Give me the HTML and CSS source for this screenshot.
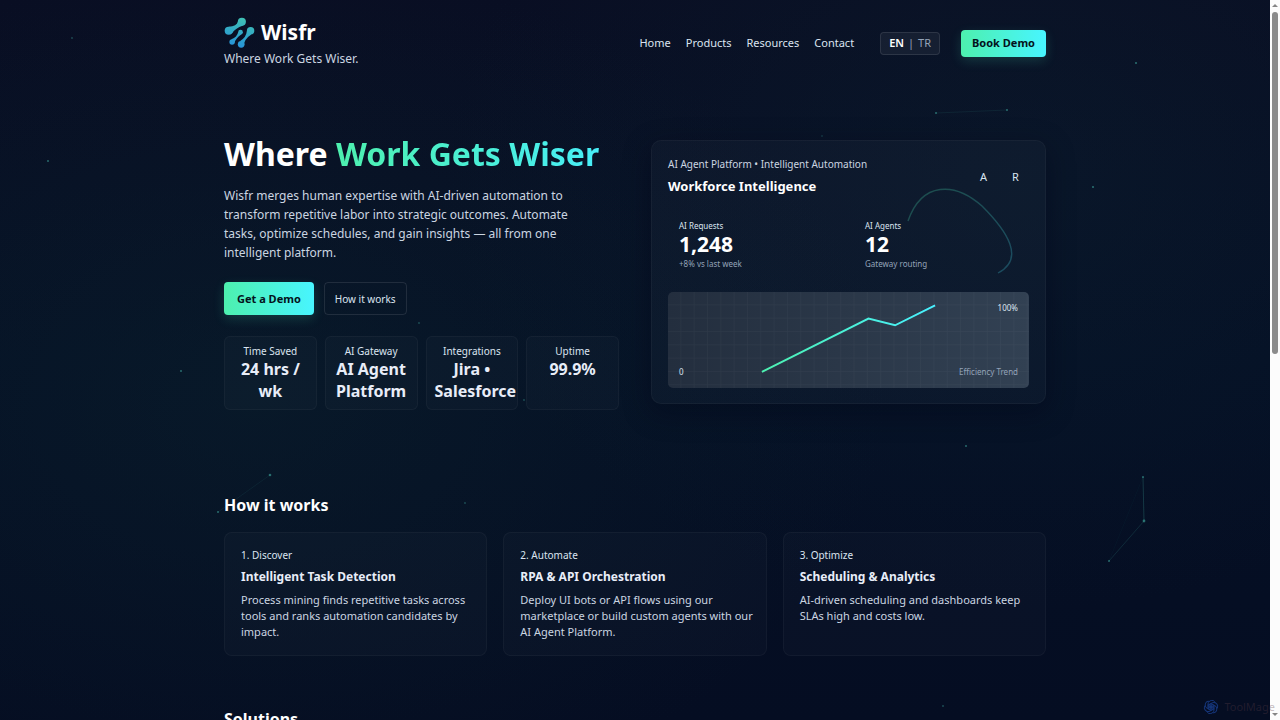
FILE: index.html
```html
<!DOCTYPE html>
<html lang="en">
<head>
<meta charset="utf-8">
<meta name="viewport" content="width=device-width, initial-scale=1">
<title>Wisfr – Where Work Gets Wiser</title>
<link rel="stylesheet" href="styles.css">
</head>
<body>
<div class="shell">
  <div class="page">
    <svg class="particles" aria-hidden="true">
      <g stroke="#4fd6c4" fill="none">
        <path d="M936 113L1007 110" stroke-opacity=".08"/>
        <path d="M270 475L218 512" stroke-opacity=".07"/>
        <path d="M1143 477L1144 521" stroke-opacity=".2"/>
        <path d="M1144 521L1109 561" stroke-opacity=".13"/>
        <path d="M1143 477L1109 561" stroke-opacity=".03"/>
      </g>
      <g fill="#4fd6c4" fill-opacity=".45">
        <circle cx="936" cy="113" r="1"/><circle cx="1007" cy="110" r="1"/>
        <circle cx="270" cy="475" r="1.3"/><circle cx="218" cy="512" r="1"/>
        <circle cx="1143" cy="477" r="1"/><circle cx="1144" cy="521" r="1.4"/><circle cx="1109" cy="561" r="1"/>
        <circle cx="1136" cy="63" r="1.1"/><circle cx="1093" cy="187" r="1.1"/>
        <circle cx="48" cy="161" r="1"/><circle cx="181" cy="371" r="1"/><circle cx="966" cy="446" r="1"/>
      </g>
      <g fill="#4fd6c4" fill-opacity=".3">
        <circle cx="72" cy="38" r=".9"/><circle cx="465" cy="503" r=".9"/><circle cx="419" cy="323" r=".9"/>
        <circle cx="524" cy="400" r=".9"/><circle cx="822" cy="136" r=".8"/><circle cx="943" cy="706" r="1"/>
      </g>
    </svg>

    <div class="container">
      <header class="header">
        <div class="brand">
          <a class="brand-link" href="#">
            <svg class="logo" viewBox="0 0 92 92" aria-hidden="true">
              <defs>
                <linearGradient id="logoFill" gradientUnits="userSpaceOnUse" x1="60" y1="5" x2="35" y2="92">
                  <stop offset="0" stop-color="#3fc0b4"/><stop offset="1" stop-color="#2591da"/>
                </linearGradient>
              </defs>
              <g fill="url(#logoFill)">
                <circle cx="53" cy="14" r="12"/><circle cx="14" cy="41" r="12"/>
                <path d="M41 14Q38 27 14 29L24 48Q32 34 57 25Z"/>
                <circle cx="49" cy="45" r="7"/><circle cx="24" cy="74" r="8"/>
                <path d="M42 45Q39 59 22 66L31 77Q35 62 52 51Z"/>
                <circle cx="79" cy="41" r="11"/><circle cx="51" cy="81" r="10"/>
                <path d="M68 41Q66 61 48 71L59 86Q59 66 81 52Z"/>
              </g>
            </svg>
            <span class="brand-name">Wisfr</span>
          </a>
          <span class="tagline">Where Work Gets Wiser.</span>
        </div>
        <div class="header-right">
          <nav class="nav">
            <a href="#">Home</a><a href="#">Products</a><a href="#">Resources</a><a href="#">Contact</a>
          </nav>
          <div class="lang">
            <button class="lang-btn active" type="button">EN</button><span>|</span><button class="lang-btn" type="button">TR</button>
          </div>
          <button class="btn btn-primary btn-small" type="button">Book Demo</button>
        </div>
      </header>

      <main>
        <section class="hero">
          <div class="hero-copy">
            <h1 class="hero-title">Where <span class="gradient-text">Work Gets Wiser</span></h1>
            <p class="lead">Wisfr merges human expertise with AI-driven automation to transform repetitive labor into strategic outcomes. Automate tasks, optimize schedules, and gain insights — all from one intelligent platform.</p>
            <div class="actions">
              <button class="btn btn-primary" type="button">Get a Demo</button>
              <button class="btn btn-ghost" type="button">How it works</button>
            </div>
            <div class="stats">
              <div class="stat"><div class="stat-label">Time Saved</div><div class="stat-value">24 hrs / wk</div></div>
              <div class="stat"><div class="stat-label">AI Gateway</div><div class="stat-value">AI Agent Platform</div></div>
              <div class="stat"><div class="stat-label">Integrations</div><div class="stat-value">Jira • Salesforce</div></div>
              <div class="stat"><div class="stat-label">Uptime</div><div class="stat-value">99.9%</div></div>
            </div>
          </div>

          <div class="panel">
            <svg class="orbit" viewBox="0 0 120 100" aria-hidden="true">
              <defs>
                <linearGradient id="orbitStroke" x1="0" y1="0" x2="1" y2="1">
                  <stop offset="0" stop-color="#4df0b0"/><stop offset="1" stop-color="#48e8ff"/>
                </linearGradient>
              </defs>
              <path d="M8 42C22 2 55 3 82 27C108 53 125 80 98 94" fill="none" stroke="url(#orbitStroke)" stroke-opacity=".24" stroke-width="1.4"/>
            </svg>
            <div class="panel-head">
              <div>
                <div class="panel-kicker">AI Agent Platform • Intelligent Automation</div>
                <h2 class="panel-title">Workforce Intelligence</h2>
              </div>
              <div class="avatars"><span class="avatar">A</span><span class="avatar">R</span></div>
            </div>
            <div class="metrics">
              <div class="metric"><div class="metric-label">AI Requests</div><div class="metric-value">1,248</div><div class="metric-note">+8% vs last week</div></div>
              <div class="metric"><div class="metric-label">AI Agents</div><div class="metric-value">12</div><div class="metric-note">Gateway routing</div></div>
            </div>
            <div class="chart">
              <svg class="chart-plot" viewBox="0 0 542 144" role="img" aria-label="Efficiency trend">
                <defs>
                  <pattern id="grid" width="20" height="20" patternUnits="userSpaceOnUse">
                    <path d="M20 0V20H0" fill="none" stroke="#fff" stroke-opacity=".035" stroke-width="2"/>
                  </pattern>
                  <linearGradient id="trend" x1="0" y1="0" x2="1" y2="0">
                    <stop offset="0" stop-color="#4df0b0"/><stop offset="1" stop-color="#48f0ff"/>
                  </linearGradient>
                </defs>
                <rect width="542" height="144" fill="url(#grid)"/>
                <polyline points="141,120 301,40 341,50 401,20" fill="none" stroke="url(#trend)" stroke-width="3"/>
              </svg>
              <div class="chart-labels">
                <div class="chart-row"><span></span><span>100%</span></div>
                <div class="chart-row"><span>0</span><span class="dim">Efficiency Trend</span></div>
              </div>
            </div>
          </div>
        </section>

        <section class="section">
          <h2 class="section-title">How it works</h2>
          <div class="steps">
            <article class="step"><div class="step-num">1. Discover</div><h3 class="step-title">Intelligent Task Detection</h3><p class="step-text">Process mining finds repetitive tasks across tools and ranks automation candidates by impact.</p></article>
            <article class="step"><div class="step-num">2. Automate</div><h3 class="step-title">RPA &amp; API Orchestration</h3><p class="step-text">Deploy UI bots or API flows using our marketplace or build custom agents with our AI Agent Platform.</p></article>
            <article class="step"><div class="step-num">3. Optimize</div><h3 class="step-title">Scheduling &amp; Analytics</h3><p class="step-text">AI-driven scheduling and dashboards keep SLAs high and costs low.</p></article>
          </div>
        </section>

        <section class="section">
          <h2 class="section-title">Solutions</h2>
        </section>
      </main>
    </div>
  </div>

  <div class="scrollbar" aria-hidden="true">
    <span class="arrow arrow-up"></span>
    <span class="thumb"></span>
    <span class="arrow arrow-down"></span>
  </div>

  <div class="watermark">
    <svg class="watermark-icon" viewBox="0 0 32 32" aria-hidden="true">
      <g fill="none" stroke="#1c459c" stroke-width="2">
        <path id="petal" d="M16 10L22 13V22C22 27 17 30 12 29C9 28 8 26 8 24"/>
        <use href="#petal" transform="rotate(60 16 16)"/><use href="#petal" transform="rotate(120 16 16)"/>
        <use href="#petal" transform="rotate(180 16 16)"/><use href="#petal" transform="rotate(240 16 16)"/>
        <use href="#petal" transform="rotate(300 16 16)"/>
      </g>
      <circle cx="16" cy="16" r="4" fill="#1c459c"/>
    </svg>
    <span>ToolMage</span>
  </div>
</div>
</body>
</html>
```
FILE: styles.css
```css
* { box-sizing: border-box; }

body {
  margin: 0;
  font-family: "Noto Sans", "Open Sans", sans-serif;
  font-size: 11px;
  line-height: 16px;
  color: #dbe4f0;
  background: #040d22;
}

h1, h2, h3, p { margin: 0; }
a { color: inherit; text-decoration: none; }
button { font: inherit; color: inherit; border: 0; background: none; padding: 0; cursor: pointer; }

.shell { position: relative; display: flex; height: 100vh; overflow: hidden; }

.page {
  position: relative;
  flex: 1;
  min-width: 0;
  overflow: hidden;
  background:
    radial-gradient(ellipse 50% 60% at 20% 55%, rgba(16, 48, 52, 0.28), transparent 100%),
    radial-gradient(ellipse 45% 60% at 80% 25%, rgba(14, 40, 54, 0.3), transparent 100%),
    linear-gradient(180deg, #090e23 0%, #051025 50%, #050d22 100%);
}

.particles { position: absolute; inset: 0; width: 100%; height: 100%; pointer-events: none; }

.container { position: relative; max-width: 822px; margin: 0 auto; }

.header { display: flex; justify-content: space-between; align-items: center; padding-top: 16px; }
.brand { display: flex; flex-direction: column; }
.brand-link { display: flex; align-items: center; gap: 6px; height: 32px; }
.logo { width: 31px; height: 31px; }
.brand-name { font-size: 21px; line-height: 32px; font-weight: 700; color: #fff; }
.tagline { font-size: 12px; line-height: 22px; color: #cbd5e1; }

.header-right { display: flex; align-items: center; }
.nav { display: flex; gap: 15px; }
.lang {
  display: flex;
  align-items: center;
  gap: 4px;
  height: 23px;
  margin: 0 21px 0 26px;
  padding: 0 8px;
  border: 1px solid rgba(255, 255, 255, 0.1);
  border-radius: 4px;
  background: rgba(255, 255, 255, 0.05);
  color: #94a3b8;
}
.lang-btn.active { color: #fff; font-weight: 600; }

.btn { height: 33px; border-radius: 4px; font-size: 11px; }
.btn-primary {
  padding: 0 13px;
  font-weight: 700;
  color: #04121c;
  background: linear-gradient(90deg, #4df0ae, #48f5ff);
  box-shadow: 0 4px 12px rgba(72, 240, 190, 0.16);
}
.btn-small { height: 27px; padding: 0 11px; }
.btn-ghost { padding: 0 10px; font-size: 10px; border: 1px solid rgba(255, 255, 255, 0.1); }

.hero { display: grid; grid-template-columns: 1fr 1fr; gap: 32px; align-items: center; padding-top: 64px; }
.hero-copy, .panel { min-width: 0; }
.hero-title { font-size: 32px; line-height: 40px; font-weight: 700; color: #fff; }
.gradient-text {
  background: linear-gradient(90deg, #4df0ae, #48eef8);
  -webkit-background-clip: text;
  background-clip: text;
  color: transparent;
}
.lead { margin-top: 12px; max-width: 370px; font-size: 12px; line-height: 19px; color: #cbd5e1; }
.actions { display: flex; gap: 10px; margin-top: 20px; }

.stats { display: grid; grid-template-columns: repeat(4, minmax(0, 1fr)); gap: 8px; margin-top: 21px; }
.stat {
  padding: 7px 8px;
  text-align: center;
  border: 1px solid rgba(255, 255, 255, 0.04);
  border-radius: 6px;
  background: rgba(255, 255, 255, 0.02);
}
.stat-label { font-size: 10px; line-height: 14px; }
.stat-value { font-size: 16px; line-height: 22px; font-weight: 700; color: #e8edf8; }

.panel {
  position: relative;
  padding: 15px 16px;
  border: 1px solid rgba(255, 255, 255, 0.04);
  border-radius: 10px;
  background: rgba(255, 255, 255, 0.025);
  box-shadow: 0 8px 28px rgba(2, 6, 23, 0.4);
}
.orbit { position: absolute; top: 38px; right: 25px; width: 120px; height: 100px; }
.panel-head { display: flex; justify-content: space-between; align-items: center; }
.panel-kicker { font-size: 10px; line-height: 16px; color: #cbd5e1; }
.panel-title { margin-top: 3px; font-size: 13px; line-height: 22px; font-weight: 700; color: #fff; }
.avatars { display: flex; gap: 11px; }
.avatar { width: 21px; text-align: center; }
.avatar:last-child { margin-right: 3px; }

.metrics { display: grid; grid-template-columns: 1fr 1fr; gap: 11px; margin-top: 12px; }
.metric { padding: 10px 11px; }
.metric-label { font-size: 8px; line-height: 14px; }
.metric-value { font-size: 21px; line-height: 22px; font-weight: 700; color: #fff; }
.metric-note { margin-top: 1px; font-size: 8px; line-height: 16px; color: #94a3b8; }

.chart {
  position: relative;
  margin-top: 10px;
  border-radius: 5px;
  overflow: hidden;
  background: linear-gradient(90deg, #232e3e, #324153);
}
.chart-plot { display: block; width: 100%; height: auto; }
.chart-labels {
  position: absolute;
  inset: 0;
  display: flex;
  flex-direction: column;
  justify-content: space-between;
  padding: 8px 11px;
  font-size: 8px;
}
.chart-row { display: flex; justify-content: space-between; }
.dim { color: #94a3b8; }

.section { padding-top: 83px; }
.section + .section { padding-top: 51px; }
.section-title { font-size: 16px; line-height: 24px; font-weight: 700; color: #fff; }
.steps { display: grid; grid-template-columns: repeat(3, minmax(0, 1fr)); gap: 16px; margin-top: 15px; }
.step {
  padding: 14px 8px 15px 16px;
  border: 1px solid rgba(255, 255, 255, 0.04);
  border-radius: 8px;
  background: rgba(255, 255, 255, 0.02);
}
.step-num { font-size: 10px; line-height: 16px; }
.step-title { margin: 4px 0 5px; font-size: 12px; line-height: 20px; font-weight: 700; color: #e8edf8; }
.step-text { font-size: 11px; line-height: 16px; color: #cbd5e1; }

.scrollbar {
  display: flex;
  flex-direction: column;
  align-items: center;
  width: 10px;
  padding: 4px 0;
  background: #fcfcfc;
}
.arrow { border: 3px solid transparent; }
.arrow-up { border-top-width: 0; border-bottom-color: #858585; }
.arrow-down { border-bottom-width: 0; border-top-color: #858585; margin-top: auto; }
.thumb { width: 6px; height: 48%; margin-top: 5px; border-radius: 3px; background: #8b8b8b; }

.watermark {
  position: absolute;
  right: 5px;
  bottom: 5px;
  display: flex;
  align-items: center;
  gap: 5px;
  font-size: 11px;
  color: rgba(90, 60, 70, 0.35);
}
.watermark-icon { width: 16px; height: 16px; opacity: 0.7; }
```
